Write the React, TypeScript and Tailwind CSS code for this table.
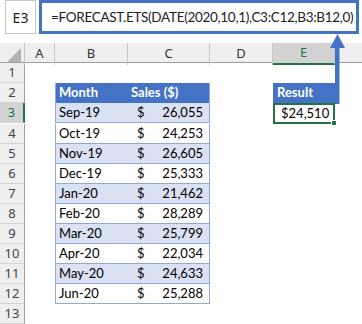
import React from "react";

const rows: [string, string][] = [
  ["Sep-19", "26,055"],
  ["Oct-19", "24,253"],
  ["Nov-19", "26,605"],
  ["Dec-19", "25,333"],
  ["Jan-20", "21,462"],
  ["Feb-20", "28,289"],
  ["Mar-20", "25,799"],
  ["Apr-20", "22,034"],
  ["May-20", "24,633"],
  ["Jun-20", "25,288"],
];

const grid = "grid grid-cols-[25px_30px_73px_82px_63px_62px_27px]";
const cellFont = "font-['Lato',sans-serif] text-[13px]";

function RowHead({ n, active }: { n: number; active?: boolean }) {
  return (
    <div
      className={
        "h-[20px] flex items-center justify-center border-b border-[#d4d4d4] font-['Noto_Sans',sans-serif] text-[13px] " +
        (active
          ? "bg-[#d2d2d2] text-[#217346] border-r-2 border-r-[#217346]"
          : "bg-[#efefef] text-[#444] border-r border-r-[#a0a0a0]")
      }
    >
      {n}
    </div>
  );
}

export default function App() {
  return (
    <div className="relative w-[362px] h-[324px] bg-white overflow-hidden">
      {/* top bar */}
      <div className="flex h-[43px] items-start">
        <div className="ml-[5px] w-[31px] h-[34px] border border-[#c6c6c6] flex items-center justify-center font-['Noto_Sans',sans-serif] text-[14px] text-[#222]">
          E3
        </div>
        <div className="ml-[3px] w-[320px] h-[34px] border-[3px] border-[#4472c4] flex items-center pl-[9px] font-['Lato',sans-serif] text-[13.5px] tracking-[-0.3px] text-[#222] whitespace-nowrap overflow-hidden">
          =FORECAST.ETS(DATE(2020,10,1),C3:C12,B3:B12,0)
        </div>
      </div>

      {/* column headers */}
      <div className={grid + " h-[20px] bg-[#efefef] border-b border-[#a0a0a0] font-['Noto_Sans',sans-serif] text-[13px] text-[#333]"}>
        <div className="relative border-r border-[#c6c6c6]">
          <div className="absolute right-[3px] bottom-[3px] w-0 h-0 border-l-[14px] border-l-transparent border-b-[14px] border-b-[#b4b4b4]" />
        </div>
        {["A", "B", "C", "D"].map((c) => (
          <div key={c} className="flex items-center justify-center border-r border-[#c6c6c6]">
            {c}
          </div>
        ))}
        <div className="flex items-center justify-center bg-[#d2d2d2] border-b-2 border-[#217346] text-[#217346] border-r border-r-[#c6c6c6]">
          E
        </div>
        <div />
      </div>

      {/* row 1 */}
      <div className={grid}>
        <RowHead n={1} />
      </div>

      {/* row 2 */}
      <div className={grid}>
        <RowHead n={2} />
        <div />
        <div className={"h-[20px] bg-[#4472c4] border-l border-[#8ea9db] flex items-center pl-[3px] font-bold text-white " + cellFont}>
          Month
        </div>
        <div className={"h-[20px] bg-[#4472c4] border-r border-[#8ea9db] flex items-center pl-[3px] font-bold text-white " + cellFont}>
          Sales ($)
        </div>
        <div />
        <div className={"h-[20px] bg-[#4472c4] flex items-center pl-[4px] font-bold text-white " + cellFont}>
          Result
        </div>
        <div />
      </div>

      {/* data rows */}
      {rows.map(([m, v], i) => {
        const shade = i % 2 === 0 ? "bg-[#d9e1f2]" : "bg-white";
        return (
          <div key={m} className={grid}>
            <RowHead n={i + 3} active={i === 0} />
            <div />
            <div className={"h-[20px] border-l border-b border-[#8ea9db] flex items-center pl-[3px] text-black " + shade + " " + cellFont}>
              {m}
            </div>
            <div className={"h-[20px] border-r border-b border-[#8ea9db] flex items-center justify-between pl-[9px] pr-[6px] text-black " + shade + " " + cellFont}>
              <span>$</span>
              <span>{v}</span>
            </div>
            <div />
            {i === 0 ? (
              <div className="relative h-[21px] border-2 border-[#217346] flex items-center justify-between pl-[6px] pr-[6px] font-['Lato',sans-serif] text-[13px] text-black">
                <span>$</span>
                <span>24,510</span>
                <div className="absolute -right-[4px] -bottom-[4px] w-[6px] h-[6px] bg-[#217346] border border-white" />
              </div>
            ) : (
              <div />
            )}
            <div />
          </div>
        );
      })}

      {/* row 13 */}
      <div className={grid}>
        <RowHead n={13} />
      </div>

      {/* arrow */}
      <svg className="absolute left-0 top-0 pointer-events-none" width="362" height="324">
        <rect x="335" y="46" width="4.5" height="58" fill="#4472c4" />
        <polygon points="330,48 345,48 337.5,34" fill="#4472c4" />
      </svg>
    </div>
  );
}
